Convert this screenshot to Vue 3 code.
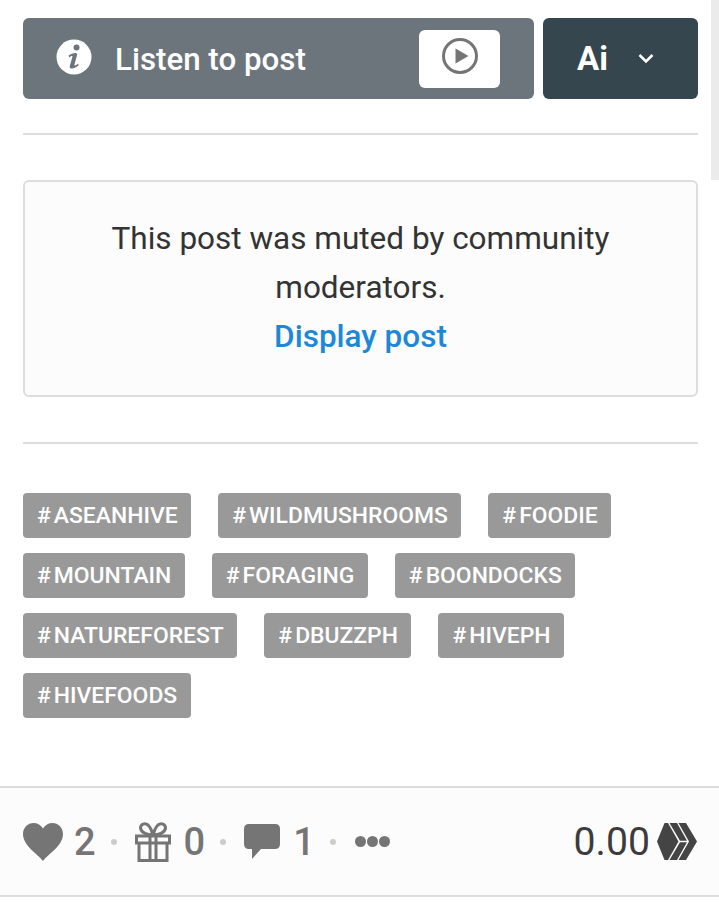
<template>
  <div class="page">
    <div class="scrollbar"></div>
    <div class="player-row">
      <div class="listen">
        <svg class="info-icon" viewBox="0 0 36 36">
          <circle cx="18" cy="18" r="17.5" fill="#fff" />
          <circle cx="20.5" cy="8.5" r="3" fill="#6c757c" />
          <path d="M12.5 16.5c2-1.6 4.600-2.600 7-2.600 1.400 0 1.900 1 1.500 2.400l-2.600 9.400c-.2.800.4 1.100 1 .8.900-.4 1.700-1 2.500-1.700l.8 1.200c-2 2.100-4.500 3.600-7 3.600-1.700 0-2.300-1.100-1.900-2.600l2.600-9.200c.2-.9-.4-1.200-1.100-.8-.8.4-1.400.9-2 1.400z" fill="#6c757c" />
        </svg>
        <span class="listen-text">Listen to post</span>
        <button class="play-btn">
          <svg viewBox="0 0 36 36" width="36" height="36">
            <circle cx="18" cy="18" r="16.5" fill="none" stroke="#757575" stroke-width="3" />
            <path d="M13.5 10.5 L26.5 18 L13.5 25.5 Z" fill="#757575" />
          </svg>
        </button>
      </div>
      <div class="ai-btn">
        <span>Ai</span>
        <svg viewBox="0 0 16 11" width="16" height="11">
          <path d="M1.500 2 L8 8.500 L14.500 2" fill="none" stroke="#fff" stroke-width="2.500" />
        </svg>
      </div>
    </div>

    <hr class="divider first" />

    <div class="muted-box">
      <p>This post was muted by community moderators.</p>
      <a class="display-link">Display post</a>
    </div>

    <hr class="divider second" />

    <div class="tags">
      <span v-for="tag in tags" :key="tag" class="tag"><i>#</i>{{ tag }}</span>
    </div>

    <div class="footer">
      <div class="stats">
        <svg class="heart" viewBox="0 0 40 38">
          <path d="M20 38 C15 31 0 23 0 11 C0 4.500 5 0 10.500 0 C14.500 0 18 2 20 5.500 C22 2 25.500 0 29.500 0 C35 0 40 4.500 40 11 C40 23 25 31 20 38 Z" fill="#757575" />
        </svg>
        <span class="count">2</span>
        <span class="dot"></span>
        <svg class="gift" viewBox="0 0 36 40">
          <path d="M1.500 14 H34.500 V21 H1.500 Z M4 21 V38.500 H32 V21 M15 14 V38.500 M21 14 V38.500" fill="none" stroke="#757575" stroke-width="3" />
          <path d="M17.500 13 C13 13 6 11 5.500 6 C5.500 2 10 .5 13 3 C15.500 5.500 17 9 17.500 13 Z M18.500 13 C23 13 30 11 30.500 6 C30.500 2 26 .5 23 3 C20.500 5.500 19 9 18.500 13 Z" fill="none" stroke="#757575" stroke-width="3" />
        </svg>
        <span class="count">0</span>
        <span class="dot"></span>
        <svg class="comment" viewBox="0 0 36 36">
          <path d="M5 0 H31 Q36 0 36 5 V20 Q36 25 31 25 H17 L8 35 V25 H5 Q0 25 0 20 V5 Q0 0 5 0 Z" fill="#757575" />
        </svg>
        <span class="count">1</span>
        <span class="dot"></span>
        <div class="more"><b></b><b></b><b></b></div>
      </div>
      <div class="payout">
        <span>0.00</span>
        <svg viewBox="0 0 40 37" width="40" height="37">
          <path d="M7.500 0 H11 L21.500 18.500 L11 37 H7.500 L0 18.500 Z" fill="#444" />
          <path d="M12.500 0 H20 L30 17.800 H23 Z M23 19.200 H30 L20 37 H12.500 Z" fill="#444" />
          <path d="M21.500 0 H29 L40 18.500 L29 37 H21.500 L32 18.500 Z" fill="#444" />
        </svg>
      </div>
    </div>
  </div>
</template>

<script setup>
const tags = [
  'ASEANHIVE',
  'WILDMUSHROOMS',
  'FOODIE',
  'MOUNTAIN',
  'FORAGING',
  'BOONDOCKS',
  'NATUREFOREST',
  'DBUZZPH',
  'HIVEPH',
  'HIVEFOODS',
]
</script>

<style>
html,
body {
  background: #fff;
  overflow: hidden;
}
</style>

<style scoped>
.page {
  position: relative;
  width: 719px;
  height: 903px;
  padding-top: 18px;
  box-sizing: border-box;
  font-family: Roboto, "Liberation Sans", sans-serif;
  color: #333;
}

.scrollbar {
  position: absolute;
  right: 0;
  top: 0;
  width: 8px;
  height: 180px;
  background: #ebebeb;
}

.player-row {
  display: flex;
  gap: 9px;
  margin: 0 21px 0 23px;
  height: 81px;
}

.listen {
  flex: 1;
  display: flex;
  align-items: center;
  padding: 0 34px 0 33px;
  background: #6c757c;
  border-radius: 6px;
  color: #fff;
}

.info-icon {
  width: 36px;
  height: 36px;
  margin-top: -4px;
}

.listen-text {
  flex: 1;
  margin: 2px 0 0 23px;
  font-size: 31.300px;
  font-weight: 500;
}

.play-btn {
  display: flex;
  align-items: center;
  justify-content: center;
  width: 81px;
  height: 58px;
  padding: 0 0 6px;
  border: none;
  border-radius: 6px;
  background: #fff;
  margin-top: 1px;
}

.ai-btn {
  display: flex;
  align-items: center;
  gap: 30px;
  width: 155px;
  padding-left: 34px;
  box-sizing: border-box;
  background: #36464e;
  border-radius: 6px;
  color: #fff;
  font-size: 33px;
  font-weight: 700;
}

.divider {
  height: 2px;
  margin: 0 21px 0 23px;
  border: none;
  background: #ddd;
}

.divider.first {
  margin-top: 34px;
}

.divider.second {
  margin-top: 45px;
}

.muted-box {
  margin: 45px 21px 0 23px;
  height: 217px;
  padding: 32px 40px 0;
  box-sizing: border-box;
  border: 2px solid #ddd;
  border-radius: 6px;
  background: #fcfcfc;
  text-align: center;
  font-size: 31.500px;
  line-height: 49px;
}

.muted-box p {
  margin: 0;
}

.display-link {
  color: #1e88d8;
  font-weight: 500;
}

.tags {
  display: flex;
  flex-wrap: wrap;
  gap: 15px 27px;
  margin: 49px 21px 0 23px;
  height: 225px;
}

.tag {
  display: block;
  height: 45px;
  padding: 0 13.500px 0 14px;
  border-radius: 4px;
  background: #999;
  color: #fff;
  font-size: 22.900px;
  font-weight: 500;
  line-height: 45px;
}

.tag i {
  font-style: normal;
  margin-right: 3px;
}

.footer {
  display: flex;
  align-items: center;
  justify-content: space-between;
  height: 111px;
  margin-top: 68px;
  padding: 0 21px 0 23px;
  box-sizing: border-box;
  border-top: 2px solid #ddd;
  border-bottom: 2px solid #ddd;
  background: #fcfcfc;
}

.stats {
  display: flex;
  align-items: center;
  color: #757575;
}

.heart {
  width: 40px;
  height: 38px;
  margin-right: -1px;
}

.gift {
  width: 36px;
  height: 40px;
  margin-right: 1px;
}

.comment {
  width: 36px;
  height: 36px;
  margin-right: 1px;
}

.count {
  margin: 0 15px 0 12px;
  font-size: 38px;
  font-weight: 500;
  line-height: 1;
}

.dot {
  width: 6px;
  height: 6px;
  margin-right: 18px;
  border-radius: 50%;
  background: #ccc;
}

.more {
  display: flex;
  gap: 1px;
  margin-left: 1px;
}

.more b {
  width: 11px;
  height: 11px;
  border-radius: 50%;
  background: #757575;
}

.payout {
  display: flex;
  align-items: center;
  gap: 7px;
  font-size: 39.200px;
  color: #3c3c3c;
}

.payout svg {
  margin-right: 1px;
}
</style>
